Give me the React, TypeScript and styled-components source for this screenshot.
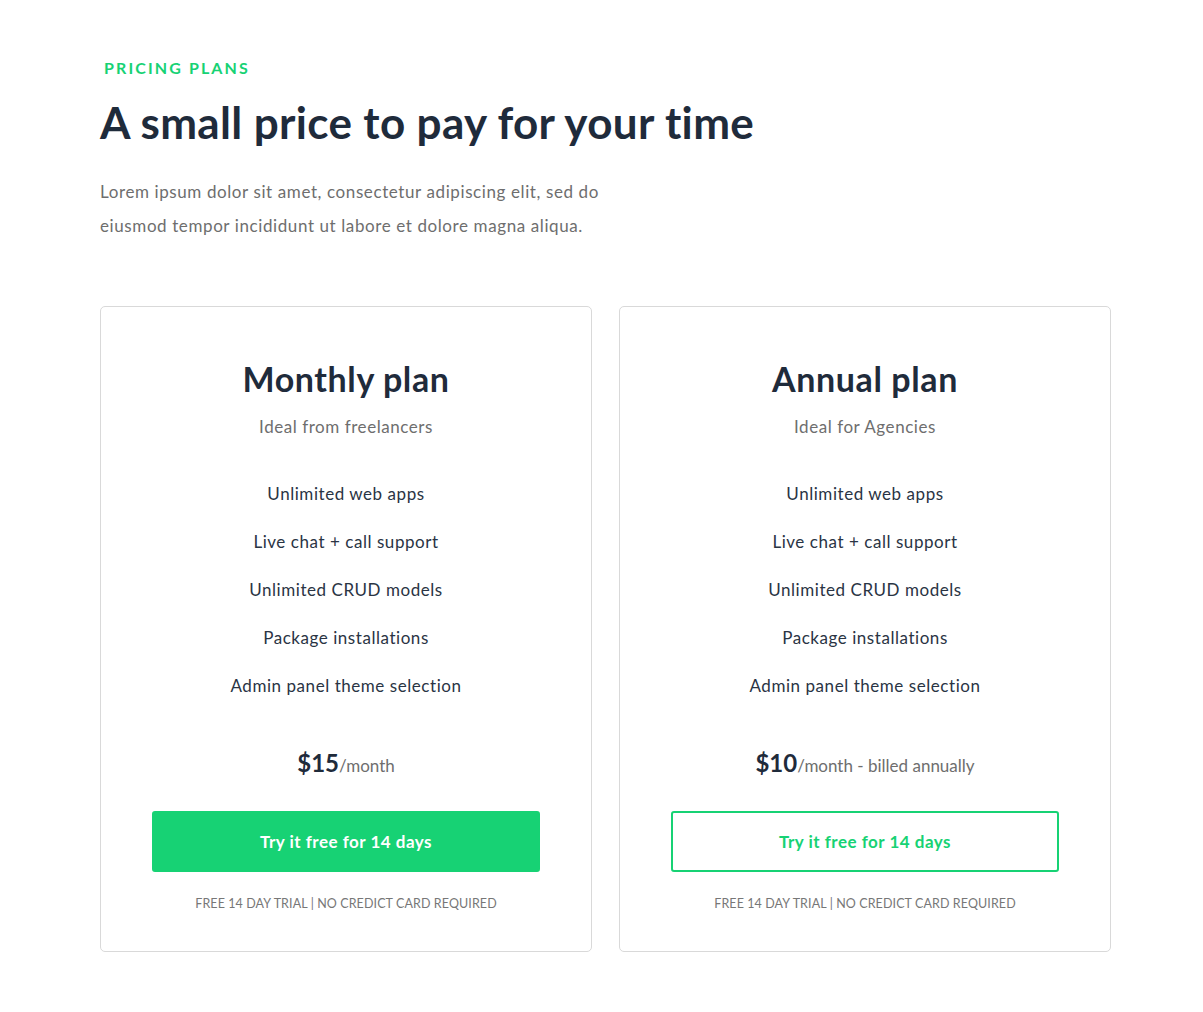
import React from "react";
import styled, { createGlobalStyle } from "styled-components";

const GlobalStyle = createGlobalStyle`
  html, body {
    margin: 0;
    padding: 0;
    background: #ffffff;
  }
  body {
    font-family: "Lato", "Open Sans", sans-serif;
    -webkit-font-smoothing: antialiased;
  }
  * {
    box-sizing: border-box;
  }
`;

const GREEN = "#17d274";
const INK = "#1f2b3b";
const GREY = "#6e6e6e";

const plans = [
  {
    name: "Monthly plan",
    tagline: "Ideal from freelancers",
    price: "$15",
    period: "/month",
    outlined: false,
  },
  {
    name: "Annual plan",
    tagline: "Ideal for Agencies",
    price: "$10",
    period: "/month - billed annually",
    outlined: true,
  },
];

const features = [
  "Unlimited web apps",
  "Live chat + call support",
  "Unlimited CRUD models",
  "Package installations",
  "Admin panel theme selection",
];

// Main Component
const App: React.FC = () => {
  return (
    <>
      <GlobalStyle />
      <Page>
        <Header>
          <Eyebrow>Pricing plans</Eyebrow>
          <Title>A small price to pay for your time</Title>
          <Intro>
            Lorem ipsum dolor sit amet, consectetur adipiscing elit, sed do
            eiusmod tempor incididunt ut labore et dolore magna aliqua.
          </Intro>
        </Header>

        <Cards>
          {plans.map((plan) => (
            <Card key={plan.name}>
              <PlanName>{plan.name}</PlanName>
              <Tagline>{plan.tagline}</Tagline>
              <Features>
                {features.map((f) => (
                  <Feature key={f}>{f}</Feature>
                ))}
              </Features>
              <Price>
                <Amount>{plan.price}</Amount>
                <Period>{plan.period}</Period>
              </Price>
              <TrialButton $outlined={plan.outlined}>
                Try it free for 14 days
              </TrialButton>
              <Note>Free 14 day trial | No credict card required</Note>
            </Card>
          ))}
        </Cards>
      </Page>
    </>
  );
};

export default App;

//
// --------------------- STYLED COMPONENTS ---------------------
//

const Page = styled.main`
  width: 1011px;
  margin-left: 100px;
  padding: 58px 0 60px;
`;

const Header = styled.header`
  display: flex;
  flex-direction: column;
`;

const Eyebrow = styled.p`
  margin: 0 0 0 4px;
  color: ${GREEN};
  font-size: 16px;
  line-height: 20px;
  font-weight: 700;
  letter-spacing: 2.1px;
  text-transform: uppercase;
`;

const Title = styled.h1`
  margin: 16px 0 0;
  color: ${INK};
  font-size: 44px;
  line-height: 56px;
  font-weight: 700;
  letter-spacing: 0.35px;
`;

const Intro = styled.p`
  margin: 25px 0 0;
  width: 560px;
  color: ${GREY};
  font-size: 17px;
  line-height: 34px;
  letter-spacing: 0.6px;
`;

const Cards = styled.section`
  margin-top: 63px;
  display: grid;
  grid-template-columns: 1fr 1fr;
  gap: 27px;
`;

const Card = styled.article`
  display: flex;
  flex-direction: column;
  align-items: center;
  padding: 50px 51px 37px;
  border: 1px solid #d9d9d9;
  border-radius: 5px;
  text-align: center;
`;

const PlanName = styled.h2`
  margin: 0;
  color: ${INK};
  font-size: 34px;
  line-height: 44px;
  font-weight: 700;
  letter-spacing: 0.6px;
`;

const Tagline = styled.p`
  margin: 14px 0 0;
  color: ${GREY};
  font-size: 17px;
  line-height: 24px;
  letter-spacing: 0.55px;
`;

const Features = styled.ul`
  margin: 43px 0 0;
  padding: 0;
  list-style: none;
  display: flex;
  flex-direction: column;
  gap: 24px;
`;

const Feature = styled.li`
  color: #2a3444;
  font-size: 17px;
  line-height: 24px;
  letter-spacing: 0.55px;
`;

const Price = styled.p`
  margin: 47px 0 0;
  height: 36px;
  line-height: 36px;
  display: flex;
  align-items: baseline;
  justify-content: center;
`;

const Amount = styled.span`
  color: ${INK};
  font-size: 24px;
  font-weight: 700;
`;

const Period = styled.span`
  color: ${GREY};
  font-size: 17px;
`;

const TrialButton = styled.button<{ $outlined: boolean }>`
  margin-top: 30px;
  width: 100%;
  height: 61px;
  border-radius: 3px;
  border: 2px solid ${GREEN};
  background: ${(p) => (p.$outlined ? "#ffffff" : GREEN)};
  color: ${(p) => (p.$outlined ? GREEN : "#ffffff")};
  font-family: inherit;
  font-size: 17px;
  font-weight: 700;
  letter-spacing: 0.5px;
  cursor: pointer;
`;

const Note = styled.p`
  margin: 22px 0 0;
  color: #777777;
  font-size: 12.5px;
  line-height: 20px;
  letter-spacing: 0.1px;
  text-transform: uppercase;
`;
